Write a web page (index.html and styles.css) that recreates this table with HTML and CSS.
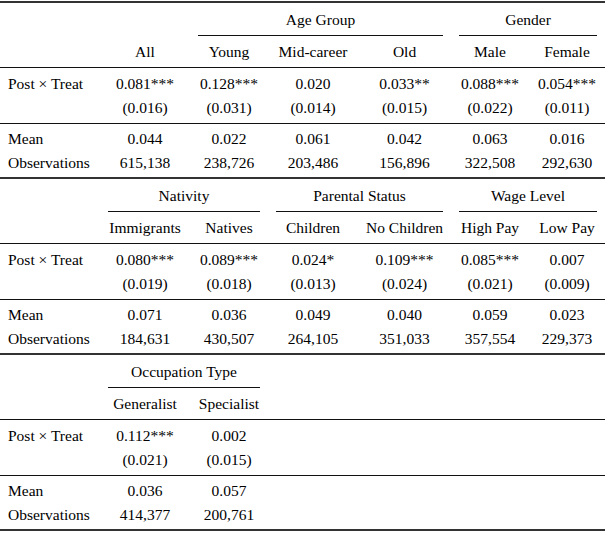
FILE: index.html
```html
<!DOCTYPE html>
<html lang="en">
<head>
<meta charset="utf-8">
<title>Regression results</title>
<link rel="stylesheet" href="styles.css">
</head>
<body>
<div class="table">
  <div class="rule heavy"></div>

  <section class="panel">
    <div class="row row-groups">
      <div class="grp span-3-6">Age Group</div>
      <div class="grp span-6-8">Gender</div>
    </div>
    <div class="row row-head">
      <div class="lbl"></div><div>All</div><div>Young</div><div>Mid-career</div><div>Old</div><div>Male</div><div>Female</div>
    </div>
    <div class="rule"></div>
    <div class="row row-coef">
      <div class="lbl">Post × Treat</div><div>0.081***</div><div>0.128***</div><div>0.020</div><div>0.033**</div><div>0.088***</div><div>0.054***</div>
    </div>
    <div class="row row-se">
      <div class="lbl"></div><div>(0.016)</div><div>(0.031)</div><div>(0.014)</div><div>(0.015)</div><div>(0.022)</div><div>(0.011)</div>
    </div>
    <div class="rule"></div>
    <div class="row row-mean">
      <div class="lbl">Mean</div><div>0.044</div><div>0.022</div><div>0.061</div><div>0.042</div><div>0.063</div><div>0.016</div>
    </div>
    <div class="row row-obs">
      <div class="lbl">Observations</div><div>615,138</div><div>238,726</div><div>203,486</div><div>156,896</div><div>322,508</div><div>292,630</div>
    </div>
  </section>

  <div class="rule heavy"></div>

  <section class="panel">
    <div class="row row-groups">
      <div class="grp span-2-4">Nativity</div>
      <div class="grp span-4-6">Parental Status</div>
      <div class="grp span-6-8">Wage Level</div>
    </div>
    <div class="row row-head">
      <div class="lbl"></div><div>Immigrants</div><div>Natives</div><div>Children</div><div>No Children</div><div>High Pay</div><div>Low Pay</div>
    </div>
    <div class="rule"></div>
    <div class="row row-coef">
      <div class="lbl">Post × Treat</div><div>0.080***</div><div>0.089***</div><div>0.024*</div><div>0.109***</div><div>0.085***</div><div>0.007</div>
    </div>
    <div class="row row-se">
      <div class="lbl"></div><div>(0.019)</div><div>(0.018)</div><div>(0.013)</div><div>(0.024)</div><div>(0.021)</div><div>(0.009)</div>
    </div>
    <div class="rule"></div>
    <div class="row row-mean">
      <div class="lbl">Mean</div><div>0.071</div><div>0.036</div><div>0.049</div><div>0.040</div><div>0.059</div><div>0.023</div>
    </div>
    <div class="row row-obs">
      <div class="lbl">Observations</div><div>184,631</div><div>430,507</div><div>264,105</div><div>351,033</div><div>357,554</div><div>229,373</div>
    </div>
  </section>

  <div class="rule heavy"></div>

  <section class="panel">
    <div class="row row-groups">
      <div class="grp span-2-4">Occupation Type</div>
    </div>
    <div class="row row-head">
      <div class="lbl"></div><div>Generalist</div><div>Specialist</div>
    </div>
    <div class="rule"></div>
    <div class="row row-coef">
      <div class="lbl">Post × Treat</div><div>0.112***</div><div>0.002</div>
    </div>
    <div class="row row-se">
      <div class="lbl"></div><div>(0.021)</div><div>(0.015)</div>
    </div>
    <div class="rule"></div>
    <div class="row row-mean">
      <div class="lbl">Mean</div><div>0.036</div><div>0.057</div>
    </div>
    <div class="row row-obs">
      <div class="lbl">Observations</div><div>414,377</div><div>200,761</div>
    </div>
  </section>

  <div class="rule heavy"></div>
</div>
</body>
</html>
```

FILE: styles.css
```css
html, body {
  margin: 0;
  padding: 0;
  background: #ffffff;
}

body {
  font-family: "Liberation Serif", "Times New Roman", serif;
  font-size: 15.5px;
  color: #000000;
}

.table {
  width: 605px;
  padding-top: 1px;
}

.rule {
  height: 1px;
  background: #111111;
}

.rule.heavy {
  height: 2px;
  background: #333333;
}

.row {
  display: grid;
  grid-template-columns: 100px 90px 78px 90px 93px 78px 76px;
  line-height: 24px;
}

.row > div {
  text-align: center;
  white-space: nowrap;
}

.row > .lbl {
  text-align: left;
  padding-left: 8px;
}

.grp {
  margin: 0 8px;
  padding: 5px 0 3px;
  border-bottom: 1px solid #111111;
}

.span-2-4 { grid-column: 2 / 4; }
.span-3-6 { grid-column: 3 / 6; }
.span-4-6 { grid-column: 4 / 6; }
.span-6-8 { grid-column: 6 / 8; }

.row-head {
  padding: 4px 0 3px;
}

.row-coef {
  padding-top: 4px;
}

.row-se {
  padding-bottom: 3px;
}

.row-mean {
  padding-top: 3px;
}

.row-obs {
  padding-bottom: 2px;
}
```
